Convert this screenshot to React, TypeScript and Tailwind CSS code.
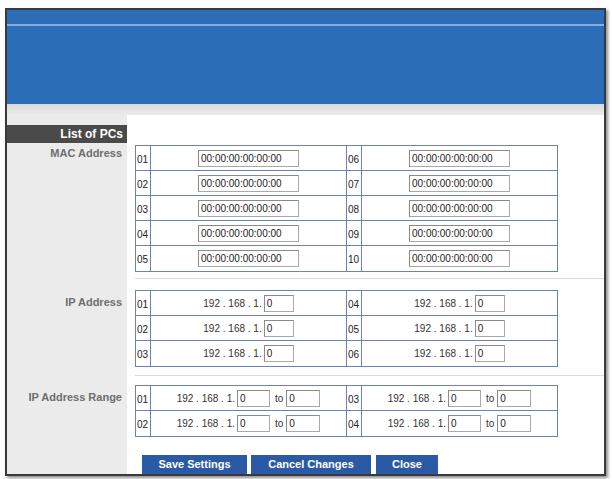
import React from "react";

const font = { fontFamily: '"Liberation Sans", Arial, sans-serif' };

const Field: React.FC<{ value: string; w: string }> = ({ value, w }) => (
  <div
    className={`${w} h-[17px] bg-white border border-[#a9a9a9] border-t-[#8a8a8a] border-l-[#8a8a8a] text-[10px] leading-[15px] pl-[2px] text-[#222]`}
  >
    {value}
  </div>
);

const Half: React.FC<{ num: string; children: React.ReactNode; last?: boolean }> = ({ num, children, last }) => (
  <div className={`flex flex-1 ${last ? "" : "border-r border-[#6c82b3]"}`}>
    <div className="w-[15px] shrink-0 border-r border-[#6c82b3] text-[10px] text-[#222] pl-[1px] pt-[6px]">{num}</div>
    <div className="flex-1 flex items-center justify-center">{children}</div>
  </div>
);

const Grid: React.FC<{ rows: [React.ReactNode, React.ReactNode][]; nums: [string, string][] }> = ({ rows, nums }) => (
  <div className="w-[423px] border border-[#6c82b3] bg-white">
    {rows.map((r, i) => (
      <div key={i} className={`flex h-[25px] ${i < rows.length - 1 ? "border-b border-[#6c82b3]" : ""}`}>
        <Half num={nums[i][0]}>{r[0]}</Half>
        <Half num={nums[i][1]} last>
          {r[1]}
        </Half>
      </div>
    ))}
  </div>
);

const Ip = () => (
  <div className="flex items-center text-[10px] text-[#333]">
    <span className="mr-[2px]">192 . 168 . 1.</span>
    <Field value="0" w="w-[30px]" />
  </div>
);

const Range = () => (
  <div className="flex items-center text-[10px] text-[#333]">
    <span className="mr-[2px]">192 . 168 . 1.</span>
    <Field value="0" w="w-[33px]" />
    <span className="ml-[5px] mr-[3px]">to</span>
    <Field value="0" w="w-[34px]" />
  </div>
);

const Label: React.FC<{ text: string }> = ({ text }) => (
  <div className="w-[120px] shrink-0 text-right pr-[5px] text-[11px] font-bold text-[#6e6e6e]">{text}</div>
);

export default function App() {
  const mac = <Field value="00:00:00:00:00:00" w="w-[101px]" />;
  const macNums: [string, string][] = [
    ["01", "06"],
    ["02", "07"],
    ["03", "08"],
    ["04", "09"],
    ["05", "10"],
  ];
  return (
    <div className="w-[612px] h-[479px] bg-white pt-[8px] pl-[5px]" style={font}>
      <div className="w-[601px] h-[468px] border-2 border-[#3a3a3a] overflow-hidden flex flex-col shadow-[2px_2px_3px_rgba(0,0,0,0.45)]">
        <div className="h-[97px] bg-[#2b6db7] pt-[14px]">
          <div className="h-[2px] bg-[#86aee0]" />
        </div>
        <div className="h-[11px] bg-gradient-to-b from-[#d9d9d9] to-[#ececec]" />
        <div className="flex-1 flex flex-col bg-[linear-gradient(to_right,#ebebeb_120px,#ffffff_120px)] pt-[10px]">
          <div className="w-[120px] h-[18px] bg-[#4a4a4a] text-white text-[12px] font-bold text-right pr-[4px] leading-[18px]">
            List of PCs
          </div>
          <div className="flex mt-[2px]">
            <Label text="MAC Address" />
            <div className="ml-[8px]">
              <Grid rows={macNums.map(() => [mac, mac])} nums={macNums} />
            </div>
          </div>
          <div className="ml-[128px] mt-[6px] h-px bg-[#dadada]" />
          <div className="flex mt-[11px]">
            <div className="pt-[4px]">
              <Label text="IP Address" />
            </div>
            <div className="ml-[8px]">
              <Grid
                rows={[
                  [<Ip />, <Ip />],
                  [<Ip />, <Ip />],
                  [<Ip />, <Ip />],
                ]}
                nums={[
                  ["01", "04"],
                  ["02", "05"],
                  ["03", "06"],
                ]}
              />
            </div>
          </div>
          <div className="ml-[128px] mt-[8px] h-px bg-[#dadada]" />
          <div className="flex mt-[9px]">
            <div className="pt-[4px]">
              <Label text="IP Address Range" />
            </div>
            <div className="ml-[8px]">
              <Grid
                rows={[
                  [<Range />, <Range />],
                  [<Range />, <Range />],
                ]}
                nums={[
                  ["01", "03"],
                  ["02", "04"],
                ]}
              />
            </div>
          </div>
          <div className="flex gap-[4px] ml-[135px] mt-[18px]">
            <button className="w-[105px] h-[19px] bg-[#2a5aa6] text-white text-[11px] font-bold">Save Settings</button>
            <button className="w-[120px] h-[19px] bg-[#2a5aa6] text-white text-[11px] font-bold">Cancel Changes</button>
            <button className="w-[62px] h-[19px] bg-[#2a5aa6] text-white text-[11px] font-bold ml-[1px]">Close</button>
          </div>
        </div>
      </div>
    </div>
  );
}
